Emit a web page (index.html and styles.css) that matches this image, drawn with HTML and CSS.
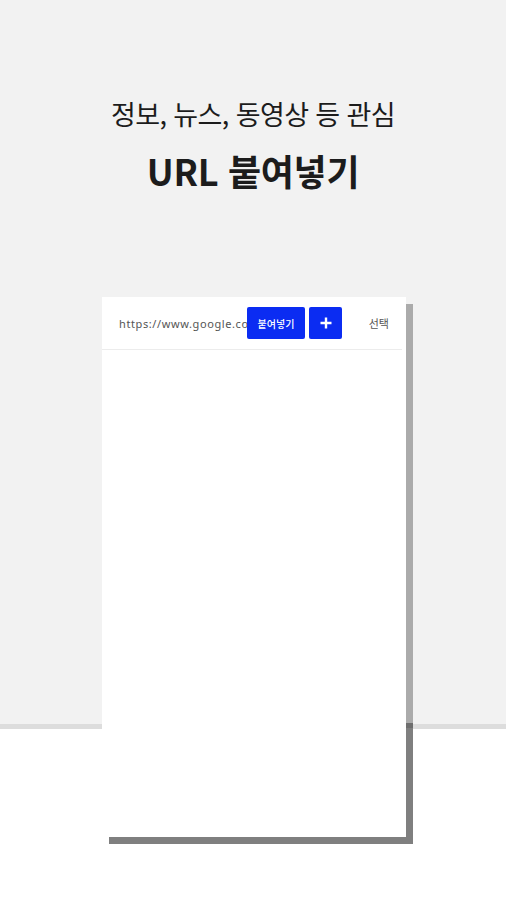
FILE: index.html
```html
<!DOCTYPE html>
<html lang="ko">
<head>
    <meta charset="UTF-8">
    <meta name="viewport" content="width=device-width, initial-scale=1.0">
    <title>URL 붙여넣기</title>
    <link rel="stylesheet" href="styles.css">
</head>
<body>
    <div class="intro">
        <p class="intro-sub">정보, 뉴스, 동영상 등 관심</p>
        <h1 class="intro-title">URL 붙여넣기</h1>
    </div>

    <div class="card">
        <div class="url-row">
            <div class="url-field">https://www.google.com</div>
            <button type="button" class="btn-paste">붙여넣기</button>
            <button type="button" class="btn-add">
                <svg width="14" height="14" viewBox="0 0 14 14">
                    <path d="M7 1.5v11M1.5 7h11" stroke="#fff" stroke-width="2.4" fill="none"/>
                </svg>
            </button>
            <span class="pick">선택</span>
        </div>
        <div class="card-body"></div>
    </div>
</body>
</html>
```

FILE: styles.css
```css
body {
    margin: 0;
    font-family: "Noto Sans CJK KR", "Noto Sans", sans-serif;
    color: #1c1c1c;
    background: linear-gradient(to bottom, #f2f2f2 0, #f2f2f2 724px, #dddddd 724px, #dddddd 729px, #ffffff 729px);
    min-height: 900px;
}
.intro {
    padding-top: 94px;
    text-align: center;
}
.intro-sub {
    margin: 0;
    font-size: 27px;
    font-weight: 400;
    letter-spacing: -0.6px;
    line-height: 40px;
}
.intro-title {
    margin: 13px 0 0;
    font-size: 36px;
    font-weight: 700;
    letter-spacing: -0.3px;
    line-height: 46px;
}
.card {
    position: relative;
    width: 304px;
    height: 540px;
    margin: 104px 0 0 102px;
    background: #fff;
}
/* hard offset shadow, lighter above the floor line */
.card::before {
    content: "";
    position: absolute;
    top: 7px;
    left: 7px;
    right: -7px;
    bottom: -7px;
    z-index: -1;
    background: linear-gradient(to bottom, #ababab 0, #ababab 419px, #6e6e6e 419px, #6e6e6e 424px, #7f7f7f 424px);
}
.url-row {
    display: flex;
    align-items: center;
    height: 52px;
    margin-right: 4px;
    padding-left: 17px;
    border-bottom: 1px solid #ececec;
}
.url-field {
    width: 128px;
    overflow: hidden;
    white-space: nowrap;
    font-family: "Noto Sans", sans-serif;
    font-size: 11px;
    letter-spacing: 0.6px;
    color: #555;
}
.btn-paste,
.btn-add {
    height: 32px;
    border: none;
    border-radius: 2px;
    background: #0b2cf2;
    color: #fff;
    padding: 0;
    display: flex;
    align-items: center;
    justify-content: center;
    cursor: pointer;
}
.btn-paste {
    width: 58px;
    font-family: "Noto Sans CJK KR", sans-serif;
    font-size: 10px;
    font-weight: 500;
}
.btn-add {
    width: 33px;
    margin-left: 4px;
}
.pick {
    margin-left: auto;
    margin-right: 13px;
    font-size: 11px;
    color: #555;
}
```
